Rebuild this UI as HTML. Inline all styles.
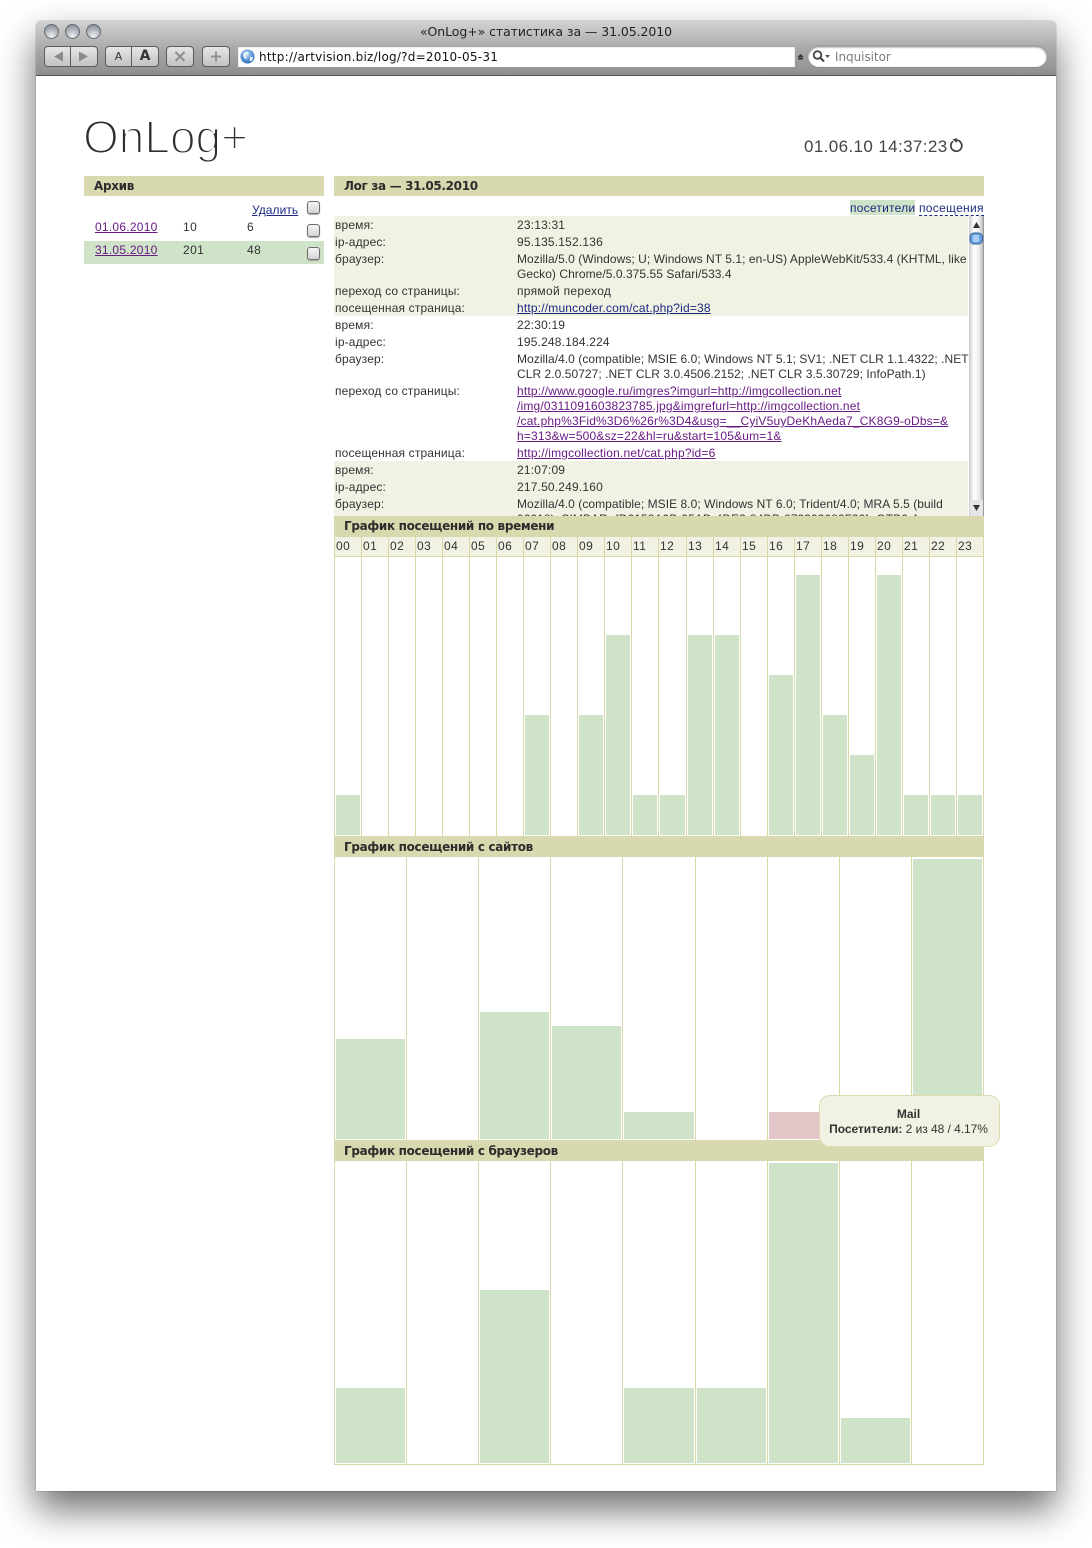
<!DOCTYPE html>
<html><head><meta charset="utf-8"><title>«OnLog+» статистика за — 31.05.2010</title>
<style>
html,body{margin:0;padding:0;background:#fff;}
body{position:relative;width:1092px;height:1548px;overflow:hidden;font:12px/15px "Liberation Sans",sans-serif;color:#333;}
div,a,span{position:absolute;white-space:nowrap;}
a{color:#1b2a80;text-decoration:underline;}
a.v{color:#6a1b84;}
#win{left:36px;top:21px;width:1020px;height:1470px;background:#fff;box-shadow:0 18px 38px rgba(0,0,0,.58),0 0 1px rgba(0,0,0,.6);border-radius:5px 5px 0 0;}
#tb{left:36px;top:21px;width:1020px;height:54px;background:linear-gradient(#d2d2d2,#aaaaaa 50%,#8e8e8e);border-radius:5px 5px 0 0;border-bottom:1px solid #4e4e4e;}
.tl{width:13px;height:13px;top:24px;border-radius:50%;border:1px solid #666b72;background:radial-gradient(circle at 50% 85%,#eef1f5,#b2b8c0 50%,#7c828a);}
.btn{top:46px;height:19px;border:1px solid #5c5c5c;border-radius:4px;background:linear-gradient(#e6e6e6,#c2c2c2);}
.sep{top:46px;width:1px;height:21px;background:#5c5c5c;}
.g{font-family:"DejaVu Sans",sans-serif;}
.h{height:20px;background:#d9d9b0;font:bold 12px/21px "DejaVu Sans",sans-serif;color:#2c2c2c;letter-spacing:-.33px;}
.cb{width:11px;height:11px;border:1px solid #6e6e6e;border-radius:3px;background:linear-gradient(#f5f5f5,#d5d5d5);box-shadow:0 1px 1px #aaa;}
.l{left:335px;letter-spacing:.15px;}
.r{left:517px;letter-spacing:.18px;}
.u{letter-spacing:.05px;}
.v1{top:556px;width:1px;height:280px;background:#d9d9a8;}
.lb{top:537px;width:26px;height:19px;line-height:18px;background:#f1f1e4;border-left:1px solid #d9d9a8;letter-spacing:.45px;text-indent:1px;}
.bar{background:#cee3c7;}
.v2{width:1px;background:#d9d9a8;}
</style></head><body>
<div id="win"></div>
<div id="tb"></div>
<div class="tl" style="left:44px"></div><div class="tl" style="left:65px"></div><div class="tl" style="left:86px"></div>
<div class="g" style="left:36px;width:1020px;top:24px;text-align:center;font-size:12.5px;line-height:16px;color:#222;letter-spacing:-.08px">«OnLog+» статистика за — 31.05.2010</div>

<div class="btn" style="left:44px;width:52px"></div><div class="sep" style="left:70px"></div>
<svg style="position:absolute;left:44px;top:46px" width="54" height="21"><path d="M10 10.500l9-5v10z" fill="#8a8a8a"/><path d="M35 5.500l9 5-9 5z" fill="#8a8a8a"/></svg>
<div class="btn" style="left:105px;width:52px"></div><div class="sep" style="left:131px"></div>
<div class="g" style="left:105px;width:27px;top:49px;text-align:center;font-size:11px;color:#333">A</div>
<div class="g" style="left:132px;width:26px;top:49px;text-align:center;font-size:14px;font-weight:bold;color:#333">A</div>
<div class="btn" style="left:166px;width:26px"></div>
<svg style="position:absolute;left:166px;top:46px" width="28" height="21"><path d="M9.500 6l9 9M18.500 6l-9 9" stroke="#8f8f8f" stroke-width="2" fill="none"/></svg>
<div class="btn" style="left:202px;width:26px"></div>
<svg style="position:absolute;left:202px;top:46px" width="28" height="21"><path d="M14 5.500v10M9 10.500h10" stroke="#8f8f8f" stroke-width="1.800" fill="none"/></svg>

<div style="left:238px;top:46px;width:557px;height:21px;background:#fff;box-shadow:inset 0 1px 1px #999"></div>
<svg style="position:absolute;left:240px;top:49px" width="15" height="15"><defs><radialGradient id="gl" cx=".45" cy=".35" r=".7"><stop offset="0" stop-color="#b7dcf7"/><stop offset="1" stop-color="#1d64b8"/></radialGradient></defs><circle cx="7.500" cy="7.500" r="7" fill="url(#gl)"/><path d="M4 3.500l4-1 1 2-3 2 1 3-2 0-2-3zM10 8l3 0-1 4-2 0z" fill="#e8f2fa"/></svg>
<div class="g" style="left:259px;top:50px;font-size:12px;color:#111;letter-spacing:.24px">http://artvision.biz/log/?d=2010-05-31</div>
<svg style="position:absolute;left:797px;top:54px" width="7" height="6"><path d="M.5 3l3-3 3 3zM1 3.500h5v2h-5z" fill="#333"/></svg>
<div style="left:808px;top:46px;width:239px;height:21px;background:#fff;border-radius:11px;box-shadow:inset 0 1px 2px #777,0 0 1px #666"></div>
<svg style="position:absolute;left:812px;top:49px" width="20" height="15"><circle cx="5.500" cy="6" r="3.800" fill="none" stroke="#444" stroke-width="1.800"/><path d="M8.500 9l3.500 3.500" stroke="#444" stroke-width="2"/><path d="M13 6h5l-2.500 3z" fill="#555"/></svg>
<div class="g" style="left:835px;top:50px;font-size:12px;color:#7b7b7b;letter-spacing:-.05px">Inquisitor</div>

<svg style="position:absolute;left:80px;top:106px" width="175" height="66"><text x="3" y="47" font-family="Liberation Sans,sans-serif" font-size="46" letter-spacing="0" fill="#2e2e2e" stroke="#fff" stroke-width="1.900">OnLog+</text></svg>
<div style="left:804px;top:137px;font-size:17px;line-height:20px;color:#444;letter-spacing:.38px">01.06.10 14:37:23</div>
<svg style="position:absolute;left:949px;top:138px" width="15" height="15"><path d="M4 3.300a5.500 5.500 0 1 0 3.500-1.100" fill="none" stroke="#444" stroke-width="1.800"/><path d="M8 0l-.5 5-4-3.500z" fill="#444"/></svg>

<div class="h" style="left:84px;top:176px;width:230px;padding-left:10px">Архив</div>
<div class="h" style="left:334px;top:176px;width:640px;padding-left:10px">Лог за — 31.05.2010</div>

<a href="#" style="left:252px;top:203px;letter-spacing:.05px">Удалить</a>
<div class="cb" style="left:307px;top:201px"></div>
<a class="v" href="#" style="left:95px;top:220px;letter-spacing:.25px">01.06.2010</a>
<div style="left:183px;top:220px;letter-spacing:.4px">10</div><div style="left:247px;top:220px">6</div>
<div class="cb" style="left:307px;top:224px"></div>
<div class="bar" style="left:84px;top:241px;width:240px;height:23px"></div>
<a class="v" href="#" style="left:95px;top:243px;letter-spacing:.25px">31.05.2010</a>
<div style="left:183px;top:243px;letter-spacing:.4px">201</div><div style="left:247px;top:243px;letter-spacing:.4px">48</div>
<div class="cb" style="left:307px;top:247px"></div>

<div class="bar" style="left:850px;top:200px;width:65px;height:15px"></div>
<div style="left:850px;top:201px;color:#1b2a80;letter-spacing:.23px">посетители</div>
<div style="left:919px;top:201px;color:#1b2a80;letter-spacing:.3px;border-bottom:1px dashed #1b2a80;height:14px">посещения</div>

<div style="left:334px;top:216px;width:634px;height:100px;background:#f1f1e4"></div>
<div style="left:334px;top:461px;width:634px;height:55px;background:#f1f1e4"></div>

<div style="left:0;top:1px;width:1092px;height:515px">
<div class="l" style="top:217px">время:</div><div class="r" style="top:217px">23:13:31</div>
<div class="l" style="top:234px">ip-адрес:</div><div class="r" style="top:234px">95.135.152.136</div>
<div class="l" style="top:251px">браузер:</div><div class="r u" style="top:251px">Mozilla/5.0 (Windows; U; Windows NT 5.1; en-US) AppleWebKit/533.4 (KHTML, like</div>
<div class="r u" style="top:266px">Gecko) Chrome/5.0.375.55 Safari/533.4</div>
<div class="l" style="top:283px">переход со страницы:</div><div class="r" style="top:283px;letter-spacing:.3px">прямой переход</div>
<div class="l" style="top:300px">посещенная страница:</div><a class="r" href="#" style="top:300px">http://muncoder.com/cat.php?id=38</a>
<div class="l" style="top:317px">время:</div><div class="r" style="top:317px">22:30:19</div>
<div class="l" style="top:334px">ip-адрес:</div><div class="r" style="top:334px">195.248.184.224</div>
<div class="l" style="top:351px">браузер:</div><div class="r u" style="top:351px">Mozilla/4.0 (compatible; MSIE 6.0; Windows NT 5.1; SV1; .NET CLR 1.1.4322; .NET</div>
<div class="r u" style="top:366px">CLR 2.0.50727; .NET CLR 3.0.4506.2152; .NET CLR 3.5.30729; InfoPath.1)</div>
<div class="l" style="top:383px">переход со страницы:</div>
<a class="r v" href="#" style="top:383px">http://www.google.ru/imgres?imgurl=http://imgcollection.net</a>
<a class="r v" href="#" style="top:398px">/img/0311091603823785.jpg&amp;imgrefurl=http://imgcollection.net</a>
<a class="r v" href="#" style="top:413px">/cat.php%3Fid%3D6%26r%3D4&amp;usg=__CyiV5uyDeKhAeda7_CK8G9-oDbs=&amp;</a>
<a class="r v" href="#" style="top:428px">h=313&amp;w=500&amp;sz=22&amp;hl=ru&amp;start=105&amp;um=1&amp;</a>
<div class="l" style="top:445px">посещенная страница:</div><a class="r v" href="#" style="top:445px">http://imgcollection.net/cat.php?id=6</a>
<div class="l" style="top:462px">время:</div><div class="r" style="top:462px">21:07:09</div>
<div class="l" style="top:479px">ip-адрес:</div><div class="r" style="top:479px">217.50.249.160</div>
<div class="l" style="top:496px">браузер:</div><div class="r u" style="top:496px">Mozilla/4.0 (compatible; MSIE 8.0; Windows NT 6.0; Trident/4.0; MRA 5.5 (build</div>
<div class="r u" style="top:511px">02018); SIMBAR={D0158A0B-95AD-4DE3-84DB-873393082F39}; GTB6.4</div>
</div>

<div style="left:969px;top:216px;width:14px;height:300px;background:linear-gradient(90deg,#c9c9c9,#fff 35%,#eee 70%,#bdbdbd);border-right:1px solid #999"></div>
<svg style="position:absolute;left:969px;top:216px" width="15" height="300"><path d="M4 12l3.500-6 3.500 6z" fill="#333"/><rect x="1" y="17" width="12.500" height="11" rx="4" fill="#6ba3df" stroke="#2f5f9c"/><rect x="4" y="19" width="6" height="7" rx="2" fill="#a9cdf2"/><rect x="1" y="284" width="13" height="16" fill="#e6e6e6"/><path d="M4 289l3.500 6 3.500-6z" fill="#333"/></svg>

<div class="h" style="left:334px;top:516px;width:640px;height:21px;padding-left:10px;line-height:20px">График посещений по времени</div>
<div class="lb" style="left:334px">00</div><div class="lb" style="left:361px">01</div><div class="lb" style="left:388px">02</div><div class="lb" style="left:415px">03</div><div class="lb" style="left:442px">04</div><div class="lb" style="left:469px">05</div><div class="lb" style="left:496px">06</div><div class="lb" style="left:523px">07</div><div class="lb" style="left:550px">08</div><div class="lb" style="left:577px">09</div><div class="lb" style="left:604px">10</div><div class="lb" style="left:631px">11</div><div class="lb" style="left:658px;width:27px">12</div><div class="lb" style="left:686px">13</div><div class="lb" style="left:713px">14</div><div class="lb" style="left:740px">15</div><div class="lb" style="left:767px">16</div><div class="lb" style="left:794px">17</div><div class="lb" style="left:821px">18</div><div class="lb" style="left:848px">19</div><div class="lb" style="left:875px">20</div><div class="lb" style="left:902px">21</div><div class="lb" style="left:929px">22</div><div class="lb" style="left:956px">23</div>
<div style="left:334px;top:556px;width:650px;height:1px;background:#d9d9a8"></div>
<div class="v1" style="left:334px"></div><div class="v1" style="left:361px"></div><div class="v1" style="left:388px"></div><div class="v1" style="left:415px"></div><div class="v1" style="left:442px"></div><div class="v1" style="left:469px"></div><div class="v1" style="left:496px"></div><div class="v1" style="left:523px"></div><div class="v1" style="left:550px"></div><div class="v1" style="left:577px"></div><div class="v1" style="left:604px"></div><div class="v1" style="left:631px"></div><div class="v1" style="left:658px"></div><div class="v1" style="left:686px"></div><div class="v1" style="left:713px"></div><div class="v1" style="left:740px"></div><div class="v1" style="left:767px"></div><div class="v1" style="left:794px"></div><div class="v1" style="left:821px"></div><div class="v1" style="left:848px"></div><div class="v1" style="left:875px"></div><div class="v1" style="left:902px"></div><div class="v1" style="left:929px"></div><div class="v1" style="left:956px"></div>
<div class="v1" style="left:983px;top:537px;height:299px"></div>
<div class="bar" style="left:336px;top:795px;width:24px;height:40px"></div>
<div class="bar" style="left:525px;top:715px;width:24px;height:120px"></div>
<div class="bar" style="left:579px;top:715px;width:24px;height:120px"></div>
<div class="bar" style="left:606px;top:635px;width:24px;height:200px"></div>
<div class="bar" style="left:633px;top:795px;width:24px;height:40px"></div>
<div class="bar" style="left:660px;top:795px;width:25px;height:40px"></div>
<div class="bar" style="left:688px;top:635px;width:24px;height:200px"></div>
<div class="bar" style="left:715px;top:635px;width:24px;height:200px"></div>
<div class="bar" style="left:769px;top:675px;width:24px;height:160px"></div>
<div class="bar" style="left:796px;top:575px;width:24px;height:260px"></div>
<div class="bar" style="left:823px;top:715px;width:24px;height:120px"></div>
<div class="bar" style="left:850px;top:755px;width:24px;height:80px"></div>
<div class="bar" style="left:877px;top:575px;width:24px;height:260px"></div>
<div class="bar" style="left:904px;top:795px;width:24px;height:40px"></div>
<div class="bar" style="left:931px;top:795px;width:24px;height:40px"></div>
<div class="bar" style="left:958px;top:795px;width:24px;height:40px"></div>

<div class="h" style="left:334px;top:836px;width:640px;height:21px;padding-left:10px;line-height:22px">График посещений с сайтов</div>
<div class="v2" style="left:334px;top:857px;height:283px"></div><div class="v2" style="left:406px;top:857px;height:283px"></div><div class="v2" style="left:478px;top:857px;height:283px"></div><div class="v2" style="left:550px;top:857px;height:283px"></div><div class="v2" style="left:622px;top:857px;height:283px"></div><div class="v2" style="left:695px;top:857px;height:283px"></div><div class="v2" style="left:767px;top:857px;height:283px"></div><div class="v2" style="left:839px;top:857px;height:283px"></div><div class="v2" style="left:911px;top:857px;height:283px"></div><div class="v2" style="left:983px;top:857px;height:283px"></div>
<div class="bar" style="left:336px;top:1039px;width:69px;height:100px"></div>
<div class="bar" style="left:480px;top:1012px;width:69px;height:127px"></div>
<div class="bar" style="left:552px;top:1026px;width:69px;height:113px"></div>
<div class="bar" style="left:624px;top:1112px;width:70px;height:27px"></div>
<div style="left:769px;top:1112px;width:69px;height:27px;background:#e3c6c8"></div>
<div class="bar" style="left:913px;top:859px;width:69px;height:280px"></div>

<div class="h" style="left:334px;top:1140px;width:640px;height:21px;padding-left:10px;line-height:22px">График посещений с браузеров</div>
<div class="v2" style="left:334px;top:1161px;height:303px"></div><div class="v2" style="left:406px;top:1161px;height:303px"></div><div class="v2" style="left:478px;top:1161px;height:303px"></div><div class="v2" style="left:550px;top:1161px;height:303px"></div><div class="v2" style="left:622px;top:1161px;height:303px"></div><div class="v2" style="left:695px;top:1161px;height:303px"></div><div class="v2" style="left:767px;top:1161px;height:303px"></div><div class="v2" style="left:839px;top:1161px;height:303px"></div><div class="v2" style="left:911px;top:1161px;height:303px"></div><div class="v2" style="left:983px;top:1161px;height:303px"></div>
<div class="v2" style="left:334px;top:1464px;height:1px;width:650px"></div>
<div class="bar" style="left:336px;top:1388px;width:69px;height:75px"></div>
<div class="bar" style="left:480px;top:1290px;width:69px;height:173px"></div>
<div class="bar" style="left:624px;top:1388px;width:70px;height:75px"></div>
<div class="bar" style="left:697px;top:1388px;width:69px;height:75px"></div>
<div class="bar" style="left:769px;top:1163px;width:69px;height:300px"></div>
<div class="bar" style="left:841px;top:1418px;width:69px;height:45px"></div>

<div style="left:819px;top:1095px;width:179px;height:50px;background:#f1f1e4;border:1px solid #dcdcb0;border-radius:11px"></div>
<div style="left:818px;top:1107px;width:181px;text-align:center;font-weight:bold">Mail</div>
<div style="left:819px;top:1122px;width:179px;text-align:center;letter-spacing:-.05px"><b>Посетители:</b> 2 из 48 / 4.17%</div>
</body></html>
